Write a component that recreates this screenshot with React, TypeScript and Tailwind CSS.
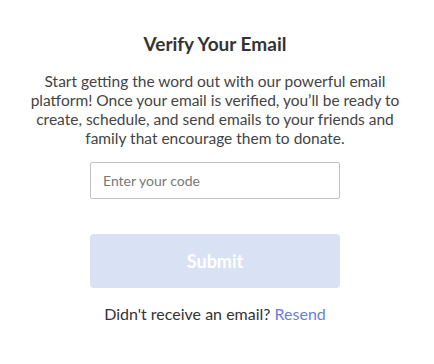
export default function App() {
  return (
    <div className="w-[430px] h-[364px] bg-white flex flex-col items-center font-['Lato',sans-serif]">
      <h1 className="mt-[32px] text-[19px] leading-[24px] font-bold text-[#333]">
        Verify Your Email
      </h1>
      <p className="mt-[16px] w-[392px] text-center text-[15.5px] leading-[19px] text-[#444]">
        Start getting the word out with our powerful email platform! Once your email is verified,
        you’ll be ready to create, schedule, and send emails to your friends and family that
        encourage them to donate.
      </p>
      <input
        type="text"
        placeholder="Enter your code"
        className="mt-[14px] w-[250px] h-[37px] px-3 border border-[#bfc3c8] rounded-[2px] text-[14px] text-[#333] placeholder:text-[#777] outline-none"
      />
      <button
        disabled
        className="mt-[35px] w-[250px] h-[54px] rounded-[4px] bg-[#d9e2f5] text-white text-[18px] font-bold"
      >
        Submit
      </button>
      <p className="mt-[16px] text-[16px] leading-[19px] text-[#333]">
        Didn't receive an email? <a className="text-[#6b7ddb]">Resend</a>
      </p>
    </div>
  );
}
